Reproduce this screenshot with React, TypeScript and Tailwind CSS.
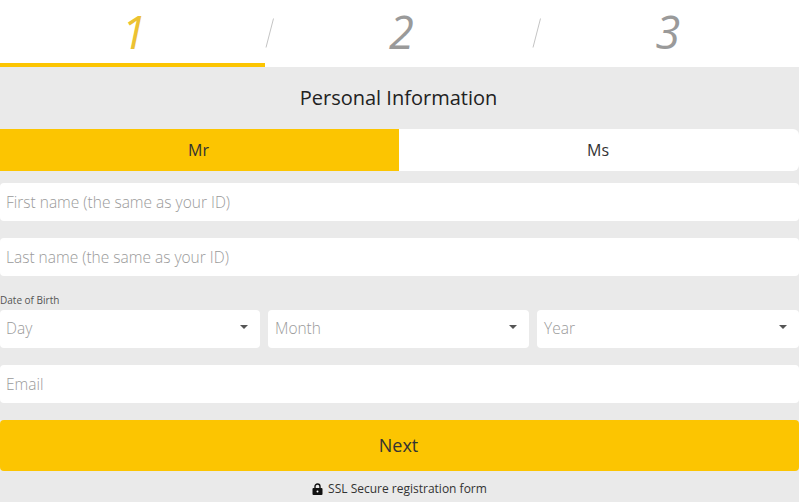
function Slash() {
  return (
    <svg width="10" height="30" viewBox="0 0 10 30" className="shrink-0 mt-[18px]">
      <path d="M8.5 0.5 L1 29.5" stroke="#c4c4c4" strokeWidth="1" fill="none" />
    </svg>
  );
}

function TextField({ placeholder, className }: { placeholder: string; className: string }) {
  return (
    <div className={`h-[38px] bg-white rounded-[4px] pl-[6px] pt-[2px] flex items-center text-[15.5px] font-light text-[#9a9a9a] ${className}`}>
      {placeholder}
    </div>
  );
}

function SelectField({ label, className }: { label: string; className: string }) {
  return (
    <div className={`relative h-[38px] bg-white rounded-[4px] flex items-center text-[15.5px] font-light text-[#9a9a9a] ${className}`}>
      {label}
      <span className="absolute right-[12px] top-[15px] w-0 h-0 border-x-[4px] border-x-transparent border-t-[4px] border-t-[#555]" />
    </div>
  );
}

export default function App() {
  return (
    <div className="w-[799px] h-[502px] overflow-hidden bg-[#eaeaea] font-['Open_Sans',sans-serif]">
      {/* Steps */}
      <div className="h-[67px] bg-white flex">
        <div className="w-[265px] pl-[3px] border-b-[4px] border-[#fcc501] flex justify-center">
          <span className="text-[45px] leading-[64px] italic text-[#ecc232]">1</span>
        </div>
        <Slash />
        <div className="flex-1 pr-[4px] flex justify-center">
          <span className="text-[45px] leading-[64px] italic text-[#9a9a9a]">2</span>
        </div>
        <Slash />
        <div className="w-[257px] pr-[5px] flex justify-center">
          <span className="text-[45px] leading-[64px] italic text-[#9a9a9a]">3</span>
        </div>
      </div>

      <h1 className="h-[62px] pr-[2px] flex items-center justify-center text-[20px] font-normal text-[#222]">
        Personal Information
      </h1>

      {/* Gender */}
      <div className="flex h-[42px] text-[16px] text-[#333]">
        <div className="w-[399px] pr-[2px] bg-[#fcc501] flex items-center justify-center">Mr</div>
        <div className="flex-1 pr-[2px] bg-white rounded-r-[6px] flex items-center justify-center">Ms</div>
      </div>

      <TextField placeholder="First name (the same as your ID)" className="mt-[12px]" />
      <TextField placeholder="Last name (the same as your ID)" className="mt-[17px]" />

      <div className="mt-[18px] h-[16px] text-[10px] leading-[12px] text-[#555]">Date of Birth</div>
      <div className="flex gap-[8px]">
        <SelectField label="Day" className="w-[260px] pl-[6px]" />
        <SelectField label="Month" className="w-[261px] pl-[7px]" />
        <SelectField label="Year" className="flex-1 pl-[7px]" />
      </div>

      <TextField placeholder="Email" className="mt-[17px]" />

      <button className="block w-full h-[51px] pr-[2px] mt-[17px] bg-[#fcc501] rounded-[4px] text-[18px] text-[#333]">
        Next
      </button>

      <div className="mt-[10px] flex items-center justify-center gap-[5px] text-[12px] leading-[16px] text-[#333]">
        <svg width="11" height="12" viewBox="0 0 11 12">
          <path d="M3 5V3.5a2.5 2.5 0 0 1 5 0V5" stroke="#111" strokeWidth="1.4" fill="none" />
          <rect x="0.5" y="5" width="10" height="7" rx="1" fill="#111" />
          <circle cx="5.5" cy="8.5" r="1" fill="#fff" />
        </svg>
        SSL Secure registration form
      </div>
    </div>
  );
}
